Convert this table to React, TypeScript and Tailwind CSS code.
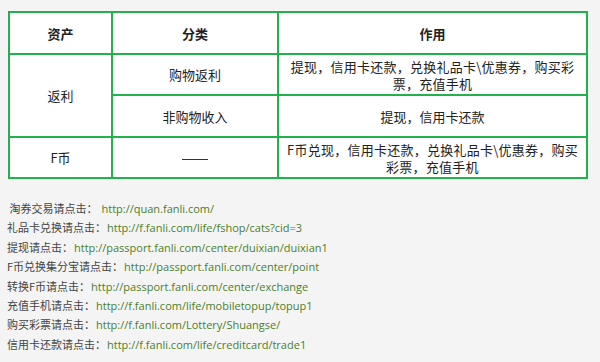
export default function App() {
    const links: [string, string][] = [
        ["\u00a0淘券交易请点击：", "http://quan.fanli.com/"],
        ["礼品卡兑换请点击：", "http://f.fanli.com/life/fshop/cats?cid=3"],
        ["提现请点击：", "http://passport.fanli.com/center/duixian/duixian1"],
        ["F币兑换集分宝请点击：", "http://passport.fanli.com/center/point"],
        ["转换F币请点击：", "http://passport.fanli.com/center/exchange"],
        ["充值手机请点击：", "http://f.fanli.com/life/mobiletopup/topup1"],
        ["购买彩票请点击：", "http://f.fanli.com/Lottery/Shuangse/"],
        ["信用卡还款请点击：", "http://f.fanli.com/life/creditcard/trade1"],
    ];

    const cell = "border-2 border-[#22b14c] text-center align-middle px-1";

    return (
        <div
            className="w-[600px] h-[362px] bg-[#f4f4f4] overflow-hidden text-[#222]"
            style={{ fontFamily: '"Noto Sans CJK SC", "Open Sans", sans-serif' }}
        >
            <div className="pt-[11px] pl-[8px]">
                <table className="w-[580px] border-collapse bg-white text-[13px] leading-[17px] table-fixed">
                    <colgroup>
                        <col className="w-[103px]" />
                        <col className="w-[166px]" />
                        <col />
                    </colgroup>
                    <tbody>
                        <tr className="h-[42px] font-bold">
                            <td className={cell}>资产</td>
                            <td className={cell}>分类</td>
                            <td className={cell}>作用</td>
                        </tr>
                        <tr className="h-[41px]">
                            <td className={cell} rowSpan={2}>返利</td>
                            <td className={cell}>购物返利</td>
                            <td className={`${cell} tracking-[0.25px]`}>提现，信用卡还款，兑换礼品卡\优惠券，购买彩票，充值手机</td>
                        </tr>
                        <tr className="h-[42px]">
                            <td className={cell}>非购物收入</td>
                            <td className={cell}>提现，信用卡还款</td>
                        </tr>
                        <tr className="h-[41px]">
                            <td className={cell}>F币</td>
                            <td className={cell}>
                                <span className="inline-block w-[26px] h-[1px] bg-[#333] align-middle" />
                            </td>
                            <td className={`${cell} tracking-[0.25px]`}>F币兑现，信用卡还款，兑换礼品卡\优惠券，购买彩票，充值手机</td>
                        </tr>
                    </tbody>
                </table>
            </div>
            <div className="pt-[20px] pl-[7px] text-[11px] leading-[19.4px]">
                {links.map(([label, url], i) => (
                    <div key={url} className="whitespace-nowrap">
                        <span className="text-[#444]">{label}</span>
                        <span
                            className={i === 0 ? "ml-[4px] text-[#4b7f2a]" : "ml-[1px] text-[#4b7f2a]"}
                            style={{ fontFamily: '"Open Sans", "Noto Sans CJK SC", sans-serif' }}
                        >
                            {url}
                        </span>
                    </div>
                ))}
            </div>
        </div>
    );
}
